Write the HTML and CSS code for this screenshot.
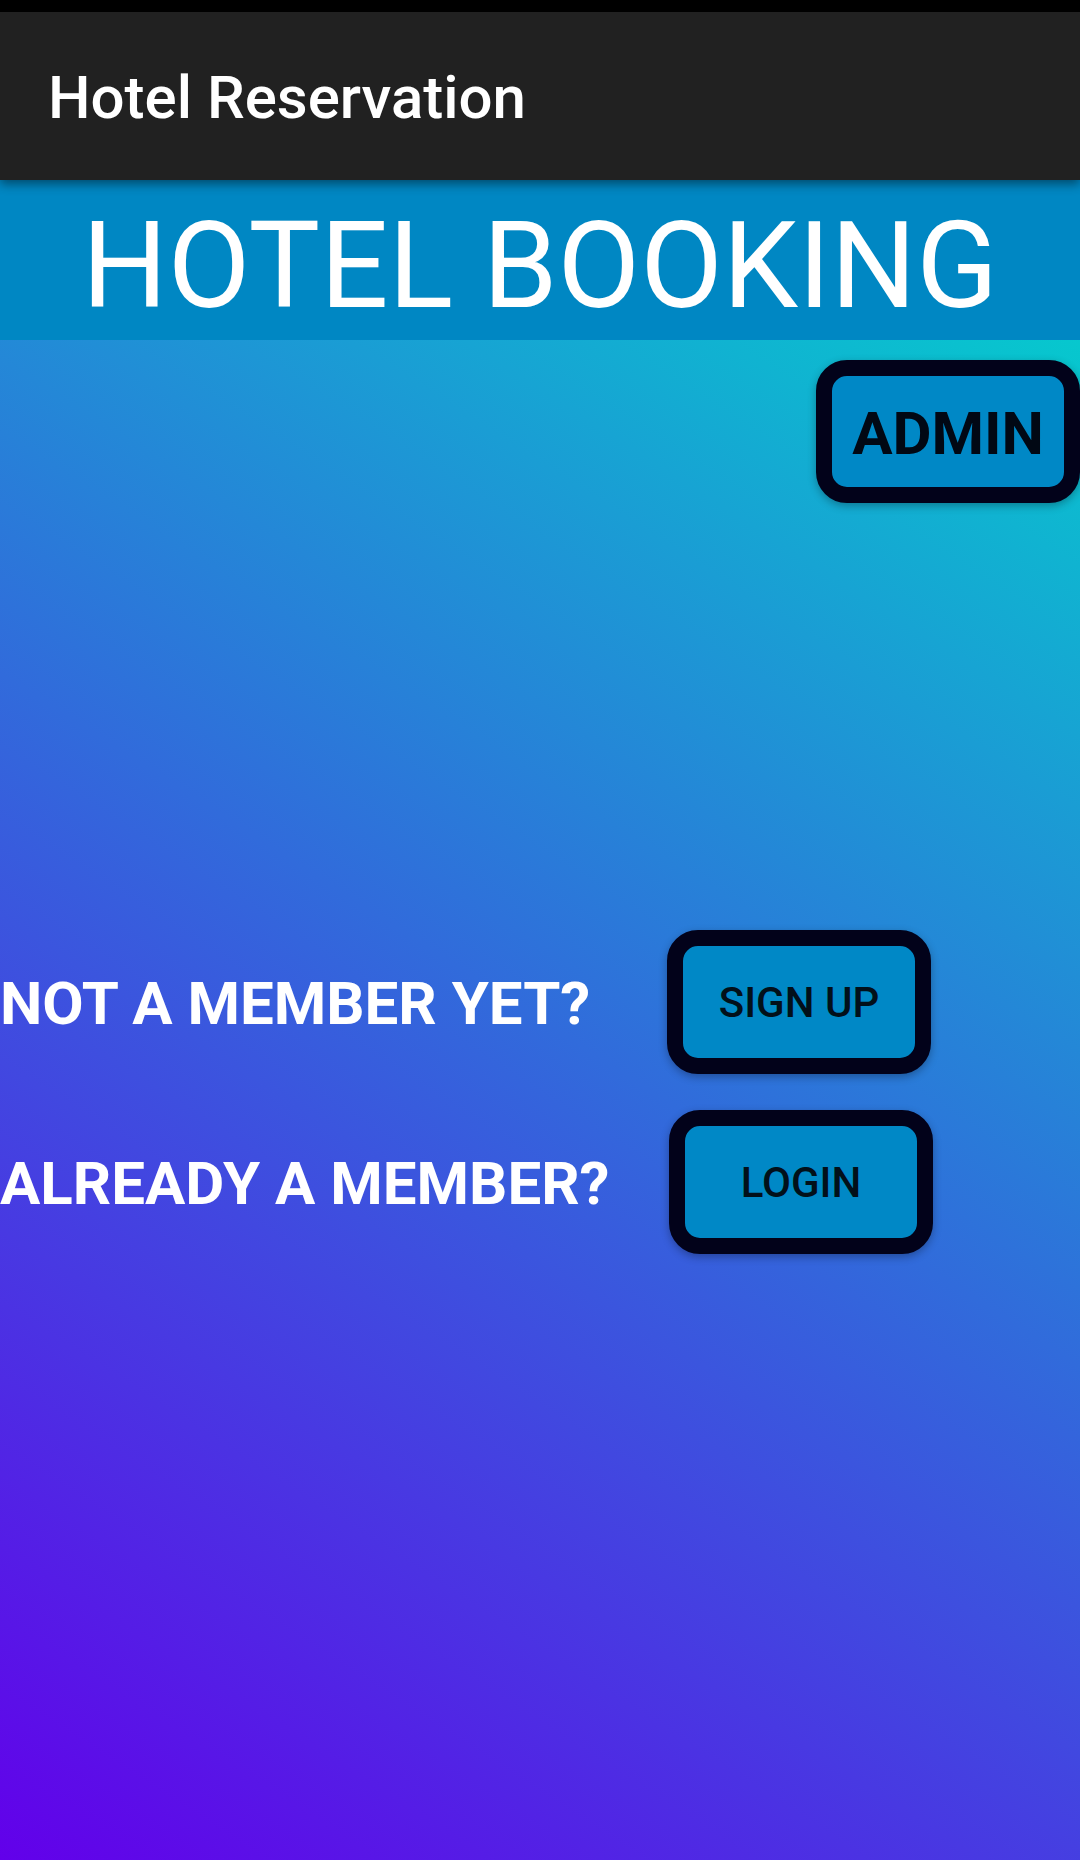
FILE: index.html
```html
<!DOCTYPE html>
<html lang="en">
<head>
<meta charset="utf-8">
<title>Hotel Reservation</title>
<link rel="stylesheet" href="styles.css">
</head>
<body>
<div class="screen">
  <div class="statusbar"></div>
  <header class="toolbar">
    <h1 class="toolbar-title">Hotel Reservation</h1>
  </header>
  <main class="content">
    <div class="banner">HOTEL BOOKING</div>
    <div class="admin-row">
      <button class="btn btn-admin">ADMIN</button>
    </div>
    <div class="member-rows">
      <div class="member-row">
        <span class="member-label">NOT A MEMBER YET?</span>
        <button class="btn btn-action">SIGN UP</button>
      </div>
      <div class="member-row">
        <span class="member-label">ALREADY A MEMBER?</span>
        <button class="btn btn-action btn-shift">LOGIN</button>
      </div>
    </div>
  </main>
</div>
</body>
</html>
```

FILE: styles.css
```css
* {
  box-sizing: border-box;
}

html, body {
  margin: 0;
  padding: 0;
  background: #000;
}

body {
  width: 1080px;
  height: 1860px;
  overflow: hidden;
  font-family: Roboto, "Noto Sans", "Liberation Sans", sans-serif;
}

.screen {
  width: 1080px;
  height: 1860px;
  display: flex;
  flex-direction: column;
}

.statusbar {
  height: 12px;
  background: #000;
  flex: none;
}

.toolbar {
  position: relative;
  z-index: 2;
  height: 168px;
  flex: none;
  background: #212121;
  padding: 56px 0 0 48px;
  box-shadow: 0 4px 10px rgba(0, 0, 0, 0.45);
}

.toolbar-title {
  margin: 0;
  font-family: Roboto, sans-serif;
  font-weight: 500;
  font-size: 60px;
  line-height: 60px;
  color: #ffffff;
}

.content {
  flex: 1;
  display: flex;
  flex-direction: column;
  background: linear-gradient(32.7deg, #6200ea 0%, #00d6cc 100%);
}

.banner {
  height: 160px;
  padding-top: 26px;
  background: #0087c3;
  color: #ffffff;
  font-family: Roboto, sans-serif;
  font-weight: 400;
  font-size: 120px;
  line-height: 120px;
  text-align: center;
}

.admin-row {
  display: flex;
  justify-content: flex-end;
  margin-top: 20px;
}

.btn {
  width: 264px;
  height: 144px;
  border: 16px solid #02021a;
  border-radius: 31px;
  background: #0088c6;
  color: #02101a;
  font-family: Roboto, sans-serif;
  display: flex;
  align-items: center;
  justify-content: center;
  padding: 0;
  box-shadow: 0 3px 8px rgba(0, 0, 0, 0.3);
  cursor: pointer;
}

.btn-admin {
  height: 143px;
  font-weight: 700;
  font-size: 60px;
  line-height: 60px;
  padding-top: 5px;
  color: #010814;
}

.btn-action {
  font-weight: 500;
  font-size: 42px;
  line-height: 42px;
  padding-top: 2px;
}

.btn-shift {
  margin-left: 2px;
}

.member-rows {
  margin-top: 427px;
  display: flex;
  flex-direction: column;
  gap: 36px;
}

.member-row {
  display: grid;
  grid-template-columns: 667px 266px;
  align-items: center;
}

.member-label {
  color: #ffffff;
  font-family: Roboto, sans-serif;
  font-weight: 700;
  font-size: 60px;
  line-height: 60px;
  padding-top: 3px;
  white-space: nowrap;
}
```
